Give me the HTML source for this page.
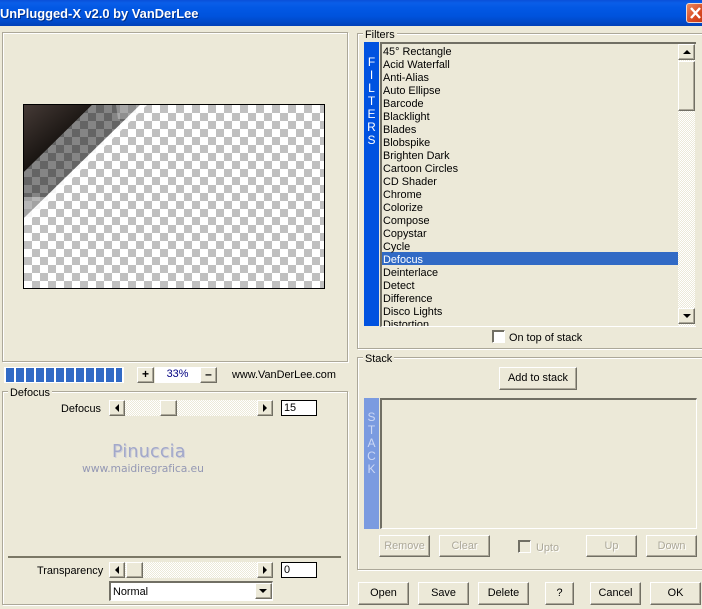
<!DOCTYPE html>
<html><head><meta charset="utf-8"><style>
html,body{margin:0;padding:0}
body{width:702px;height:609px;overflow:hidden;position:relative;background:#ece9d8;font:10.9px/15px "Liberation Sans",sans-serif;color:#000}
div,span{position:absolute;box-sizing:border-box;white-space:nowrap}
.g{border:1px solid #aca899;box-shadow:inset 1px 1px 0 #fff,1px 1px 0 #fff}
.lg{background:#ece9d8;padding:0 2px;height:13px}
.b{background:#ece9d8;border:1px solid;border-color:#fff #716f64 #716f64 #fff;box-shadow:inset -1px -1px 0 #aca899;text-align:center}
.btn{height:22px;line-height:21px;background:#ece9d8;border:1px solid;border-color:#fff #716f64 #716f64 #fff;box-shadow:inset -1px -1px 0 #aca899;text-align:center}
.dis{color:#aca899;text-shadow:1px 1px 0 #fff}
.tr{background-color:#fff;background-image:repeating-conic-gradient(#ece9d8 0 25%,#fff 0 50%);background-size:2px 2px}
.in{background:#fff;border:1px solid #000;padding:1px 0 0 2px;line-height:12px}
.ar{width:0;height:0}
.v{text-align:center;color:#fff;width:16px;left:364px;font-size:12px}
.li{left:383px;height:13px}
</style></head><body>

<div style="left:0;top:0;width:702px;height:26px;background:linear-gradient(#0a50d8 0,#0a5ee8 3px,#0258e4 8px,#0053dd 16px,#0047c4 23px,#0040b8 26px)"></div>
<div style="left:0;top:5px;color:#fff;font:bold 12.9px/18px 'Liberation Sans',sans-serif;text-shadow:1px 1px 0 #00308a">UnPlugged-X v2.0 by VanDerLee</div>
<div style="left:686px;top:3px;width:20px;height:20px;border:1px solid #f0d8cc;border-radius:3px;background:linear-gradient(135deg,#ea8a60,#d8471f 60%,#c23a16)"></div>
<svg style="position:absolute;left:686px;top:3px" width="16" height="20"><path d="M5 5L14 15M14 5L5 15" stroke="#fff" stroke-width="2.4"/></svg>

<!-- preview -->
<div class="g" style="left:2px;top:32px;width:346px;height:330px"></div>
<div style="left:23px;top:104px;width:302px;height:185px;border:1px solid #000;background-color:#fff;background-image:conic-gradient(#c0c0c0 0 25%,#fff 0 50%,#c0c0c0 0 75%,#fff 0);background-size:16px 16px;background-position:0 0"></div>
<svg style="position:absolute;left:24px;top:105px" width="125" height="125">
<defs><linearGradient id="d" x1="0" y1="0" x2="0.5" y2="0.6"><stop offset="0" stop-color="#453a36"/><stop offset="1" stop-color="#171310"/></linearGradient></defs>
<path d="M68 0H116L0 113V67Z" fill="#000" fill-opacity=".48"/>
<path d="M92 0H116L102 14L94 14Z" fill="#fff" fill-opacity=".28"/>
<path d="M0 92L25 92L0 113Z" fill="#fff" fill-opacity=".4"/>
<path d="M0 0H68L0 67Z" fill="url(#d)"/>
<path d="M116 0H123L0 121V113Z" fill="#fff" fill-opacity=".85"/>
</svg>

<!-- progress + zoom -->
<div style="left:4px;top:367px;width:120px;height:16px;background:#fff"></div>
<div style="left:6px;top:368px;width:116px;height:14px;background:repeating-linear-gradient(90deg,#316ac5 0 8px,#fff 8px 10px)"></div>
<div class="b" style="left:137px;top:367px;width:17px;height:16px;font:bold 12px/13px 'Liberation Sans',sans-serif">+</div>
<div style="left:155px;top:367px;width:45px;height:16px;background:#fff;color:#000080;text-align:center;line-height:15px">33%</div>
<div class="b" style="left:200px;top:367px;width:17px;height:16px;font:bold 12px/13px 'Liberation Sans',sans-serif">–</div>
<div style="left:232px;top:368px">www.VanDerLee.com</div>

<!-- Defocus group -->
<div class="g" style="left:2px;top:391px;width:346px;height:214px"></div>
<div class="lg" style="left:8px;top:386px">Defocus</div>
<div style="left:61px;top:402px">Defocus</div>
<div class="tr" style="left:109px;top:400px;width:164px;height:16px"></div>
<div class="b" style="left:109px;top:400px;width:16px;height:16px"></div>
<div class="ar" style="left:115px;top:404px;border:4px solid transparent;border-left:0;border-right:4px solid #000"></div>
<div class="b" style="left:160px;top:400px;width:17px;height:16px"></div>
<div class="b" style="left:257px;top:400px;width:16px;height:16px"></div>
<div class="ar" style="left:263px;top:404px;border:4px solid transparent;border-right:0;border-left:4px solid #000"></div>
<div class="in" style="left:281px;top:400px;width:36px;height:16px">15</div>
<div style="left:112px;top:442px;font:17.5px/20px 'DejaVu Sans',sans-serif;color:#a2a8ca;letter-spacing:.2px;text-shadow:1px 1px 0 #d0d0d8">Pinuccia</div>
<div style="left:82px;top:462px;font:10.8px/13px 'DejaVu Sans',sans-serif;color:#9498b4;letter-spacing:-.1px">www.maidiregrafica.eu</div>

<div style="left:8px;top:556px;width:333px;height:2px;background:#7b7866"></div>
<div style="left:37px;top:564px">Transparency</div>
<div class="tr" style="left:109px;top:562px;width:164px;height:16px"></div>
<div class="b" style="left:109px;top:562px;width:16px;height:16px"></div>
<div class="ar" style="left:115px;top:566px;border:4px solid transparent;border-left:0;border-right:4px solid #000"></div>
<div class="b" style="left:126px;top:562px;width:17px;height:16px"></div>
<div class="b" style="left:257px;top:562px;width:16px;height:16px"></div>
<div class="ar" style="left:263px;top:566px;border:4px solid transparent;border-right:0;border-left:4px solid #000"></div>
<div class="in" style="left:281px;top:562px;width:36px;height:16px">0</div>
<div style="left:109px;top:581px;width:164px;height:20px;background:#fff;border:1px solid #fff;border-top:2px solid #716f64;border-left:2px solid #716f64;padding:2px 0 0 2px">Normal</div>
<div class="b" style="left:255px;top:583px;width:17px;height:16px"></div>
<div class="ar" style="left:259px;top:589px;border:4px solid transparent;border-bottom:0;border-top:4px solid #000"></div>

<!-- Filters -->
<div class="g" style="left:357px;top:33px;width:350px;height:316px"></div>
<div class="lg" style="left:363px;top:28px">Filters</div>
<div style="left:364px;top:42px;width:15px;height:284px;background:#0052e0"></div>
<div class="v" style="top:56px;line-height:13px;left:364px;width:15px;white-space:normal">F<br>I<br>L<br>T<br>E<br>R<br>S</div>
<div style="left:380px;top:42px;width:316px;height:285px;background:#ece9d8;border-left:2px solid #716f64;border-top:2px solid #716f64;border-bottom:1px solid #fff;overflow:hidden"></div>
<div style="left:382px;top:252px;width:296px;height:13px;background:#316ac5"></div>
<div class="li" style="top:45px">45° Rectangle</div>
<div class="li" style="top:58px">Acid Waterfall</div>
<div class="li" style="top:71px">Anti-Alias</div>
<div class="li" style="top:84px">Auto Ellipse</div>
<div class="li" style="top:97px">Barcode</div>
<div class="li" style="top:110px">Blacklight</div>
<div class="li" style="top:123px">Blades</div>
<div class="li" style="top:136px">Blobspike</div>
<div class="li" style="top:149px">Brighten Dark</div>
<div class="li" style="top:162px">Cartoon Circles</div>
<div class="li" style="top:175px">CD Shader</div>
<div class="li" style="top:188px">Chrome</div>
<div class="li" style="top:201px">Colorize</div>
<div class="li" style="top:214px">Compose</div>
<div class="li" style="top:227px">Copystar</div>
<div class="li" style="top:240px">Cycle</div>
<div class="li" style="top:253px;color:#fff">Defocus</div>
<div class="li" style="top:266px">Deinterlace</div>
<div class="li" style="top:279px">Detect</div>
<div class="li" style="top:292px">Difference</div>
<div class="li" style="top:305px">Disco Lights</div>
<div class="li" style="top:318px;height:8px;overflow:hidden">Distortion</div>
<div class="tr" style="left:678px;top:44px;width:17px;height:282px"></div>
<div class="b" style="left:678px;top:44px;width:17px;height:16px"></div>
<div class="ar" style="left:683px;top:50px;border:4px solid transparent;border-top:0;border-bottom:4px solid #000"></div>
<div class="b" style="left:678px;top:61px;width:17px;height:50px"></div>
<div class="b" style="left:678px;top:308px;width:17px;height:16px"></div>
<div class="ar" style="left:683px;top:314px;border:4px solid transparent;border-bottom:0;border-top:4px solid #000"></div>
<div style="left:492px;top:330px;width:13px;height:13px;background:#fff;border:1px solid #716f64;border-right-color:#fff;border-bottom-color:#fff;box-shadow:inset 1px 1px 0 #716f64"></div>
<div style="left:509px;top:331px">On top of stack</div>

<!-- Stack -->
<div class="g" style="left:357px;top:357px;width:350px;height:213px"></div>
<div class="lg" style="left:363px;top:352px">Stack</div>
<div class="btn" style="left:499px;top:367px;width:78px;height:23px">Add to stack</div>
<div style="left:364px;top:398px;width:15px;height:131px;background:#7b9be0"></div>
<div class="v" style="top:411px;line-height:13px;left:364px;width:15px;color:#ccd8f5;white-space:normal">S<br>T<br>A<br>C<br>K</div>
<div style="left:380px;top:398px;width:317px;height:131px;border-left:2px solid #716f64;border-top:2px solid #716f64;border-right:1px solid #fff;border-bottom:1px solid #fff"></div>
<div class="btn dis" style="left:379px;top:535px;width:51px">Remove</div>
<div class="btn dis" style="left:439px;top:535px;width:51px">Clear</div>
<div style="left:518px;top:540px;width:13px;height:13px;border:1px solid #716f64;border-right-color:#fff;border-bottom-color:#fff;box-shadow:inset 1px 1px 0 #716f64"></div>
<div class="dis" style="left:536px;top:541px">Upto</div>
<div class="btn dis" style="left:586px;top:535px;width:51px">Up</div>
<div class="btn dis" style="left:646px;top:535px;width:51px">Down</div>

<!-- bottom buttons -->
<div class="btn" style="left:358px;top:582px;width:51px;height:23px">Open</div>
<div class="btn" style="left:418px;top:582px;width:51px;height:23px">Save</div>
<div class="btn" style="left:478px;top:582px;width:51px;height:23px">Delete</div>
<div class="btn" style="left:545px;top:582px;width:29px;height:23px">?</div>
<div class="btn" style="left:590px;top:582px;width:51px;height:23px">Cancel</div>
<div class="btn" style="left:650px;top:582px;width:51px;height:23px">OK</div>
</body></html>
